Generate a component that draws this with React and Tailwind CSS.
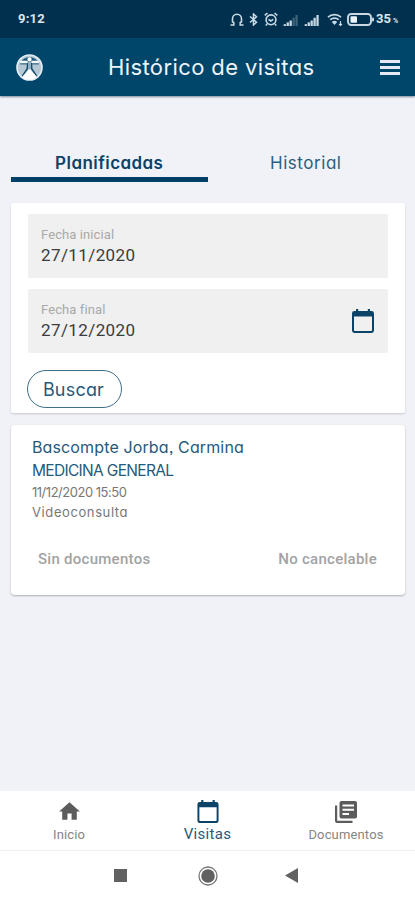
import React from "react";
import { MdHome } from "react-icons/md";

const geo = "font-['Inter',sans-serif] [font-feature-settings:'cv11','ss03'] whitespace-nowrap";
const rob = "font-['Roboto',sans-serif] whitespace-nowrap";

function Calendar({ className }) {
  return (
    <svg viewBox="0 0 22 24" className={className} fill="currentColor">
      <path d="M4 0h2.200v2h9.600V0H18v2h1.600A2.400 2.400 0 0 1 22 4.400v17.200a2.400 2.400 0 0 1-2.400 2.400H2.400A2.400 2.400 0 0 1 0 21.600V4.400A2.400 2.400 0 0 1 2.400 2H4zM2 7.500v13.700c0 .5.3.8.8.8h16.400c.5 0 .8-.3.8-.8V7.500z" />
    </svg>
  );
}

function Signal({ className, level }) {
  return (
    <svg viewBox="0 0 16 12" className={className} fill="#c9d9e3">
      {[2, 4, 6, 9, 12].map((h, i) => (
        <rect key={h} x={i * 3.2} y={12 - h} width="2.5" height={h} opacity={i < level ? 1 : 0.3} />
      ))}
    </svg>
  );
}

function StatusBar() {
  return (
    <div className="flex h-[38px] items-center bg-[#00304e] pl-[18px] text-[#dbe6ee]">
      <span className={`${rob} w-[212px] text-[13px] font-bold tracking-[0.2px]`}>9:12</span>
      <svg viewBox="0 0 14 13" className="h-[13px] w-[14px] shrink-0" fill="none" stroke="#c9d9e3" strokeWidth="1.600">
        <path d="M.5 12h3.300V9.500L2.500 9V5.700a4.500 4.500 0 0 1 9 0V9l-1.300.5V12h3.300" />
      </svg>
      <svg viewBox="0 0 9 13" className="ml-[5px] h-[13px] w-[9px] shrink-0" fill="none" stroke="#c9d9e3" strokeWidth="1.500">
        <path d="M1 3.500 7.500 9.300 4.500 12V1l3 2.700L1 9.500" />
      </svg>
      <svg viewBox="0 0 14 14" className="ml-[6px] size-[14px] shrink-0" fill="none" stroke="#c9d9e3" strokeWidth="1.600">
        <circle cx="7" cy="7.800" r="4.900" />
        <path d="M.7 3.300 3.500 1M13.300 3.300 10.500 1M4.500 7.300l2.300 1.700 2.500-1.700M3 12l-1.200 1.500M11 12l1.200 1.500" />
      </svg>
      <Signal className="ml-[5px] mt-[2px] h-[11px] w-[16px] shrink-0" level={3} />
      <Signal className="ml-[5px] mt-[2px] h-[11px] w-[16px] shrink-0" level={5} />
      <svg viewBox="0 0 16 13" className="ml-[7px] h-[13px] w-[16px] shrink-0" fill="none" stroke="#c9d9e3" strokeWidth="1.700">
        <path d="M1 4.200a9.500 9.500 0 0 1 13 0M3.300 6.700a6.200 6.200 0 0 1 8.400 0" />
        <path d="M7.500 12 4.800 9a4 4 0 0 1 5.400 0z" fill="#c9d9e3" stroke="none" />
        <path d="M13.500 8v4.500M12 11l1.500 1.500L15 11" strokeWidth="1.100" />
      </svg>
      <svg viewBox="0 0 28 13" className="ml-[4px] h-[13px] w-[28px] shrink-0">
        <rect x="1" y="1" width="23" height="11" rx="3.200" fill="none" stroke="#c9d9e3" strokeWidth="1.900" />
        <rect x="3.500" y="3.300" width="6.500" height="6.400" rx="1" fill="#eef4f8" />
        <rect x="25" y="4.500" width="2" height="4" rx="1" fill="#c9d9e3" />
      </svg>
      <span className={`${rob} ml-[1px] text-[13px] font-bold`}>35</span>
      <span className={`${rob} ml-[2px] mt-[5px] text-[7px] font-bold`}>%</span>
    </div>
  );
}

function Logo() {
  return (
    <svg viewBox="0 0 26 26" className="size-[27px] shrink-0">
      <circle cx="13" cy="13" r="12" fill="#b4c9d5" stroke="#e4eef4" strokeWidth="1.600" />
      <path d="M4.500 7.500A10.500 10.500 0 0 1 21.500 7.500z" fill="#1f5a7b" />
      <path d="M11 8v6l-5 7.500M15 8v6l5 7.500" fill="none" stroke="#164f70" strokeWidth="1.500" />
      <path d="M4 7.600h7.200M14.800 7.600H22" stroke="#f4f8fa" strokeWidth="2" />
      <path d="M4 9.500h6.200M15.800 9.500H22" stroke="#3a6d8a" strokeWidth="1" />
      <circle cx="13" cy="5.200" r="2" fill="#fff" />
      <path d="M11.800 8h2.400v6.500h-2.400z" fill="#8fafc0" />
      <path d="M13 14.500 20 22C16.500 25.800 9.500 25.800 6 22z" fill="#fff" />
    </svg>
  );
}

function Field({ label, value, icon }) {
  return (
    <div className="flex h-16 items-center justify-between rounded-[2px] bg-[#f0f0f0] pl-[13px] pr-[14px]">
      <div className={rob}>
        <div className="text-[13px] leading-[18px] tracking-[0.1px] text-[#a9a9a9]">{label}</div>
        <div className="text-[17px] leading-[22px] tracking-[0.4px] text-[#3c3c3c]">{value}</div>
      </div>
      {icon}
    </div>
  );
}

export default function App() {
  return (
    <div className="flex h-[900px] w-[415px] flex-col overflow-hidden bg-[#f0f2f7]">
      <StatusBar />
      <header className="flex h-[58px] shrink-0 items-center bg-[#00456a] pl-[16px] pr-[15px] shadow-[0_1px_2px_rgba(0,30,60,0.5)]">
        <Logo />
        <h1 className={`${geo} ml-[65px] flex-1 text-[22px] tracking-[0.4px] text-[#eef4f8]`}>Histórico de visitas</h1>
        <div className="flex flex-col gap-[3px]">
          <div className="h-[3px] w-5 bg-[#e4e9f5]" />
          <div className="h-[3px] w-5 bg-[#e4e9f5]" />
          <div className="h-[3px] w-5 bg-[#e4e9f5]" />
        </div>
      </header>

      <main className="flex-1 px-[11px] pt-[49px]">
        <div className="flex">
          <div className="h-[37px] w-[197px] border-b-[5px] border-[#003f68] text-center">
            <span className={`${geo} text-[17px] font-semibold leading-[36px] tracking-[0.43px] text-[#0b4268]`}>Planificadas</span>
          </div>
          <div className="h-[37px] w-[197px] text-center">
            <span className={`${geo} text-[17px] leading-[36px] tracking-[0.55px] text-[#2b5f80]`}>Historial</span>
          </div>
        </div>

        <section className="mt-[21px] flex h-[210px] w-[394px] flex-col rounded-[2px] bg-white px-[17px] pt-[11px] shadow-[0_1px_2px_rgba(0,0,0,0.18)]">
          <Field label="Fecha inicial" value="27/11/2020" />
          <div className="h-[11px]" />
          <Field label="Fecha final" value="27/12/2020" icon={<Calendar className="h-6 w-[22px] text-[#0b4268]" />} />
          <button className={`${geo} -ml-px mt-[17px] h-[38px] w-[95px] rounded-full border border-[#3e6d8a] pr-[2px] text-[18px] tracking-[0.2px] text-[#27597b]`}>
            Buscar
          </button>
        </section>

        <section className="mt-3 h-[170px] w-[394px] rounded-[4px] bg-white pt-[11px] shadow-[0_1px_2px_rgba(0,0,0,0.28)]">
          <div className={`${geo} pl-[21px]`}>
            <div className="text-[16px] leading-[23px] tracking-[0.13px] text-[#265a7c]">Bascompte Jorba, Carmina</div>
            <div className="text-[15.500px] leading-[23px] tracking-[-0.68px] text-[#265a7c]">MEDICINA GENERAL</div>
            <div className="text-[13px] leading-5 tracking-[-0.48px] text-[#777]">11/12/2020 15:50</div>
            <div className="text-[13px] leading-5 tracking-[0.6px] text-[#777]">Videoconsulta</div>
          </div>
          <div className={`${rob} mt-[27px] flex justify-between pl-[27px] pr-7 text-[15px] font-medium leading-5 tracking-[0.27px] text-[#a3a3a3]`}>
            <span>Sin documentos</span>
            <span>No cancelable</span>
          </div>
        </section>
      </main>

      <nav className={`${rob} flex h-[60px] shrink-0 border-b border-[#f0f0f0] bg-white`}>
        <div className="flex w-[138px] flex-col items-center pt-2 text-[#5c5c5c]">
          <MdHome className="size-[25px]" />
          <span className="mt-[3px] text-[13px] leading-4 tracking-[0.1px] text-[#858585]">Inicio</span>
        </div>
        <div className="flex w-[139px] flex-col items-center pt-[9px] text-[#0b4268]">
          <Calendar className="h-[23px] w-[22px]" />
          <span className="mt-[2px] text-[15px] leading-[18px] tracking-[0.3px] text-[#27597b]">Visitas</span>
        </div>
        <div className="flex w-[138px] flex-col items-center pt-[10px]">
          <svg viewBox="0 0 22 22" className="size-[22px]" fill="#5c5c5c">
            <path fillRule="evenodd" d="M6.500 0h13.500a2 2 0 0 1 2 2v13.500a2 2 0 0 1-2 2H6.500a2 2 0 0 1-2-2V2a2 2 0 0 1 2-2zM7.500 3.500v2h11.500v-2zM7.500 7.700v2h11.500v-2zM7.500 12v2h6.500v-2z" />
            <path d="M0 4.500h2.200v15.300h15.300V22H2a2 2 0 0 1-2-2z" />
          </svg>
          <span className="mt-[4px] text-[13px] leading-4 tracking-[0.15px] text-[#858585]">Documentos</span>
        </div>
      </nav>

      <div className="flex h-[49px] shrink-0 items-center bg-white pl-[114px]">
        <div className="size-[13px] bg-[#616161]" />
        <svg viewBox="0 0 20 20" className="ml-[71px] size-5">
          <circle cx="10" cy="10" r="9" fill="none" stroke="#777" strokeWidth="1.300" />
          <circle cx="10" cy="10" r="6.800" fill="#616161" />
        </svg>
        <svg viewBox="0 0 13 15" className="ml-[67px] h-[15px] w-[13px]">
          <path d="M0 7.500 13 0v15z" fill="#616161" />
        </svg>
      </div>
    </div>
  );
}
